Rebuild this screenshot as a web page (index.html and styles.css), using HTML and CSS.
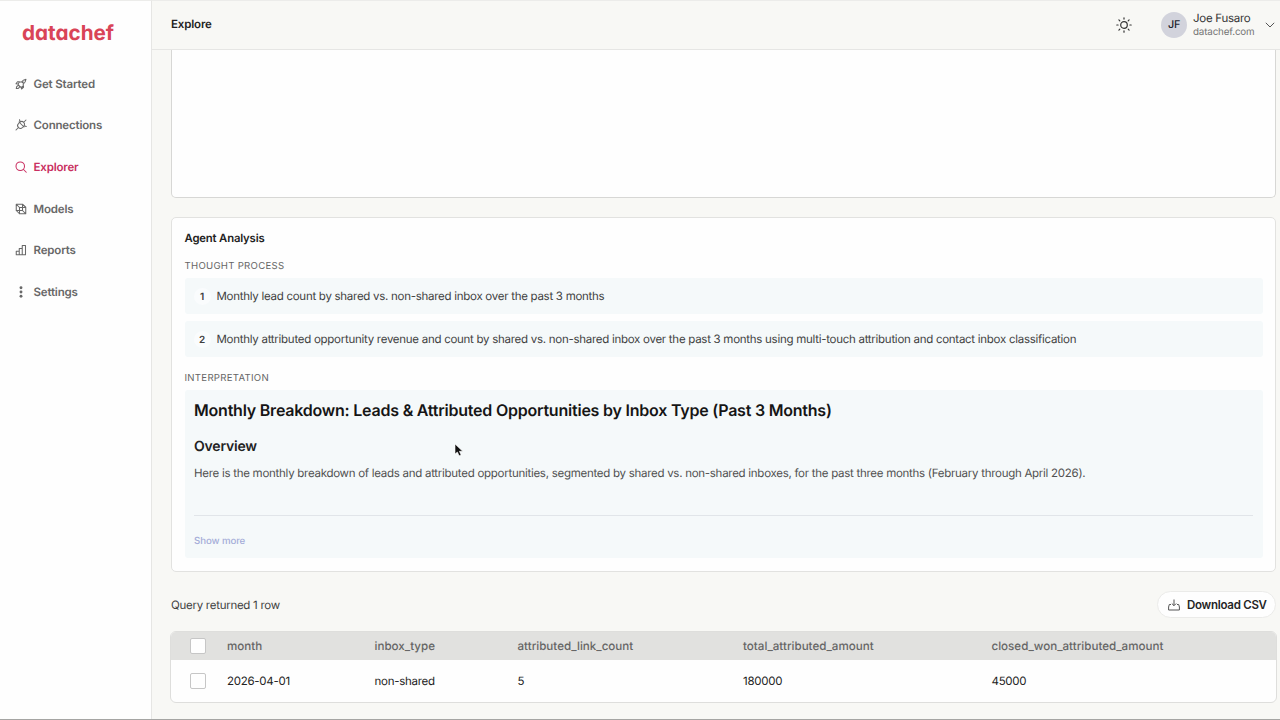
FILE: index.html
```html
<!DOCTYPE html>
<html lang="en">
<head>
    <meta charset="UTF-8">
    <meta name="viewport" content="width=device-width, initial-scale=1.0">
    <title>datachef - Explore</title>
    <link rel="stylesheet" href="styles.css">
</head>
<body>
    <div class="app">
        <aside class="sidebar">
            <div class="logo">datachef</div>
            <nav class="nav">
                <a class="nav-item">
                    <svg class="icon" viewBox="0 0 24 24"><path d="M8 15.500 6 12l3-4h4c2.500-3.500 5-5 9-5.500C21.500 6.500 20 9.500 16.500 12v4l-4 3zM6 12l-4-.5L5 7.500h4M12.500 19l.5 3 4-3.500V16M6 15c-2.500 1-3.500 3-3.500 6C5.500 21.500 8 20.500 9 18"/><circle cx="15.500" cy="8.500" r="1"/></svg>
                    <span>Get Started</span>
                </a>
                <a class="nav-item">
                    <svg class="icon" viewBox="0 0 24 24"><path d="m8 6 10 10M9 7 7 9a5.600 5.600 0 0 0 8 8l2-2M9 7l2-1.500a5.600 5.600 0 0 1 7.500 7.500L17 15M6.500 17.500 2 22M18 6l4-4M9 1.500l1 3M19.500 14l3 1"/></svg>
                    <span>Connections</span>
                </a>
                <a class="nav-item active">
                    <svg class="icon" viewBox="0 0 24 24"><circle cx="10.500" cy="10.500" r="8.500"/><path d="m17 17 5.500 5.500"/></svg>
                    <span>Explorer</span>
                </a>
                <a class="nav-item">
                    <svg class="icon" viewBox="0 0 24 24"><path d="M2.500 2.500H15l6.500 6V21.500H9L2.500 15zM2.500 2.500 9 9h12.500M9 9v12.500M15 2.500V15H2.500M15 15l6.500 6.500"/></svg>
                    <span>Models</span>
                </a>
                <a class="nav-item">
                    <svg class="icon" viewBox="0 0 24 24"><path d="M2.500 21.500v-7h6v7M8.500 21.500V9h6v12.500M14.500 21.500V3h6.500v18.500zM2.500 21.500h18.500"/></svg>
                    <span>Reports</span>
                </a>
                <a class="nav-item">
                    <svg class="icon dots" viewBox="0 0 24 24"><circle cx="12" cy="3.500" r="2.900"/><circle cx="12" cy="12" r="2.900"/><circle cx="12" cy="20.500" r="2.900"/></svg>
                    <span>Settings</span>
                </a>
            </nav>
        </aside>

        <div class="main">
            <header class="header">
                <h1>Explore</h1>
                <div class="header-right">
                    <svg class="sun" viewBox="0 0 16 16"><circle cx="8" cy="8" r="3.300"/><path d="M8 .8v1.300M8 13.900v1.300M.8 8h1.300M13.900 8h1.300M2.900 2.900l.9.900M12.200 12.200l.9.900M2.900 13.100l.9-.9M12.200 3.800l.9-.9"/></svg>
                    <div class="avatar">JF</div>
                    <div class="user">
                        <div class="user-name">Joe Fusaro</div>
                        <div class="user-org">datachef.com</div>
                    </div>
                    <svg class="chevron" viewBox="0 0 10 6"><path d="m.8.8 4.200 4.200L9.200.8"/></svg>
                </div>
            </header>

            <main class="content">
                <section class="panel"></section>

                <section class="card">
                    <h2>Agent Analysis</h2>
                    <h3 class="label">Thought process</h3>
                    <div class="step"><span class="step-num">1</span><p>Monthly lead count by shared vs. non-shared inbox over the past 3 months</p></div>
                    <div class="step"><span class="step-num">2</span><p>Monthly attributed opportunity revenue and count by shared vs. non-shared inbox over the past 3 months using multi-touch attribution and contact inbox classification</p></div>
                    <h3 class="label">Interpretation</h3>
                    <div class="interpretation">
                        <h4 class="title">Monthly Breakdown: Leads &amp; Attributed Opportunities by Inbox Type (Past 3 Months)</h4>
                        <h5 class="subtitle">Overview</h5>
                        <p class="text">Here is the monthly breakdown of leads and attributed opportunities, segmented by shared vs. non-shared inboxes, for the past three months (February through April 2026).</p>
                        <hr>
                        <a class="show-more">Show more</a>
                    </div>
                </section>

                <div class="toolbar">
                    <span class="row-count">Query returned 1 row</span>
                    <button class="download">
                        <svg viewBox="0 0 12 12"><path d="M6 .5v6M3.800 4.500 6 6.700 8.200 4.500M3 5.500H1.300L.6 8v3h10.800V8l-.7-2.500H9"/></svg>
                        <span>Download CSV</span>
                    </button>
                </div>

                <div class="table">
                    <div class="row row-head">
                        <span class="checkbox"></span>
                        <span>month</span>
                        <span>inbox_type</span>
                        <span>attributed_link_count</span>
                        <span>total_attributed_amount</span>
                        <span>closed_won_attributed_amount</span>
                    </div>
                    <div class="row">
                        <span class="checkbox"></span>
                        <span>2026-04-01</span>
                        <span>non-shared</span>
                        <span>5</span>
                        <span>180000</span>
                        <span>45000</span>
                    </div>
                </div>
            </main>
        </div>
    </div>
    <svg class="cursor" viewBox="0 0 10 14"><path d="M1 1v10l2.400-2 1.700 3.800 2-.9-1.700-3.600h3.300z"/></svg>
</body>
</html>
```
FILE: styles.css
```css
* {
    margin: 0;
    padding: 0;
    box-sizing: border-box;
}

body {
    font-family: Inter, sans-serif;
    font-size: 11.5px;
    letter-spacing: -0.275px;
    color: #3f3f3f;
    background: #f8f8f5;
    overflow: hidden;
    text-rendering: geometricPrecision;
}

.app {
    display: flex;
    height: 720px;
    border-bottom: 1px solid #a5a5a3;
}

.sidebar {
    width: 152px;
    flex: none;
    background: #fefefe;
    border-right: 1px solid #e6e6e4;
    border-top: 1px solid #ececea;
}

.logo {
    height: 62px;
    padding: 18px 0 0 22px;
    font-size: 20.7px;
    line-height: 28px;
    font-weight: 700;
    letter-spacing: 0;
    font-feature-settings: "cv11";
    color: #d94457;
}

.nav-item {
    display: flex;
    align-items: center;
    gap: 7px;
    height: 41.6px;
    padding-left: 14.5px;
    font-weight: 600;
    letter-spacing: -0.17px;
    color: #686868;
}

.nav-item.active {
    color: #c92f61;
}

.icon {
    width: 12px;
    height: 12px;
    flex: none;
    fill: none;
    stroke: currentColor;
    stroke-width: 2.1;
    stroke-linejoin: round;
    stroke-linecap: round;
}

.dots {
    fill: currentColor;
    stroke: none;
}

.main {
    flex: 1;
    min-width: 0;
    display: flex;
    flex-direction: column;
}

.header {
    height: 50px;
    flex: none;
    display: flex;
    align-items: center;
    justify-content: space-between;
    padding: 0 5px 0 19px;
    border-bottom: 1px solid #e6e6e4;
    border-top: 1px solid #ececea;
}

.header h1 {
    padding-bottom: 2px;
    font-size: 11.5px;
    font-weight: 600;
    letter-spacing: -0.15px;
    color: #222;
}

.header-right {
    display: flex;
    align-items: center;
}

.sun {
    width: 16px;
    height: 16px;
    margin-right: 29px;
    fill: none;
    stroke: #333;
    stroke-width: 1.2;
    stroke-linecap: round;
}

.avatar {
    width: 26px;
    height: 26px;
    border-radius: 50%;
    background: #d2d3dc;
    color: #23242f;
    font-size: 10.8px;
    font-weight: 500;
    line-height: 26px;
    text-align: center;
}

.user {
    width: 78px;
    padding: 1px 0 0 6px;
    white-space: nowrap;
}

.user-name {
    font-size: 11.5px;
    line-height: 14px;
    color: #333;
}

.user-org {
    font-size: 9.8px;
    line-height: 15px;
    letter-spacing: -0.15px;
    color: #747474;
}

.chevron {
    width: 10px;
    height: 6px;
    fill: none;
    stroke: #555;
}

.content {
    flex: 1;
    padding: 0 4px 0 19px;
}

.panel,
.card {
    background: #fefefe;
    border: 1px solid #e2e2e0;
    border-radius: 5px;
}

.panel {
    height: 148px;
    border-top: 0;
    border-top-left-radius: 0;
    border-top-right-radius: 0;
    border-color: #d7d7d5;
}

.card {
    height: 355px;
    margin-top: 19px;
    padding: 13px 12.5px;
}

.card h2 {
    font-size: 11.3px;
    line-height: 14px;
    font-weight: 600;
    letter-spacing: -0.16px;
    color: #222;
}

.label {
    margin: 14.5px 0 5.5px;
    font-size: 9.6px;
    line-height: 13px;
    font-weight: 400;
    letter-spacing: 0.28px;
    text-transform: uppercase;
    color: #666;
}

.step {
    display: flex;
    align-items: center;
    height: 36px;
    margin-bottom: 7px;
    padding-left: 9px;
    background: #f5f9fa;
    border-radius: 3px;
}

.step-num {
    width: 17px;
    height: 17px;
    margin-right: 6px;
    padding-top: 1px;
    border-radius: 50%;
    background: #fafcfd;
    font-size: 10px;
    line-height: 17px;
    font-weight: 600;
    text-align: center;
}

.step p,
.text {
    white-space: nowrap;
}

.interpretation {
    height: 167.5px;
    padding: 9px 9.5px;
    background: #f5f9fa;
    border-radius: 3px;
}

.title {
    font-size: 16px;
    line-height: 23px;
    font-weight: 600;
    letter-spacing: -0.22px;
    color: #151515;
    white-space: nowrap;
}

.subtitle {
    margin-top: 14.5px;
    font-size: 14px;
    line-height: 20px;
    font-weight: 600;
    letter-spacing: -0.2px;
    color: #222;
}

.text {
    margin-top: 7px;
    line-height: 18px;
    color: #505050;
}

.interpretation hr {
    margin: 33px 0 19px;
    border: 0;
    border-top: 1px solid #e1e5e9;
}

.show-more {
    display: block;
    font-size: 9.7px;
    line-height: 14px;
    font-weight: 500;
    letter-spacing: -0.1px;
    color: #a4acd8;
}

.toolbar {
    display: flex;
    align-items: center;
    justify-content: space-between;
    height: 27px;
    margin: 19px 0 13px;
}

.download {
    display: flex;
    align-items: center;
    gap: 7px;
    width: 119px;
    height: 27px;
    padding-left: 10px;
    background: #fefefe;
    border: 1px solid #ebebe9;
    border-radius: 14px;
    font: 600 11.5px Inter, sans-serif;
    letter-spacing: -0.27px;
    color: #252525;
    white-space: nowrap;
}

.download svg {
    width: 12px;
    height: 12px;
    flex: none;
    fill: none;
    stroke: #555;
}

.table {
    height: 72px;
    margin: 0 -1px 0 -1px;
    background: #fefefe;
    border: 1px solid #dededc;
    border-radius: 6px;
    overflow: hidden;
}

.row {
    display: grid;
    grid-template-columns: 37px 147.5px 143px 225.5px 248.5px 1fr;
    align-items: center;
    height: 42px;
    padding-left: 19px;
    color: #222;
}

.row-head {
    height: 28px;
    background: #e1e1df;
    color: #666;
    font-size: 11.6px;
    font-weight: 500;
    letter-spacing: 0;
}

.checkbox {
    width: 16px;
    height: 16px;
    background: #fefefe;
    border: 1px solid #c6c6c6;
    border-radius: 2px;
}

.cursor {
    position: absolute;
    left: 454px;
    top: 443px;
    width: 10px;
    height: 14px;
    fill: #111;
    stroke: #fff;
    stroke-width: 0.6;
}
```
